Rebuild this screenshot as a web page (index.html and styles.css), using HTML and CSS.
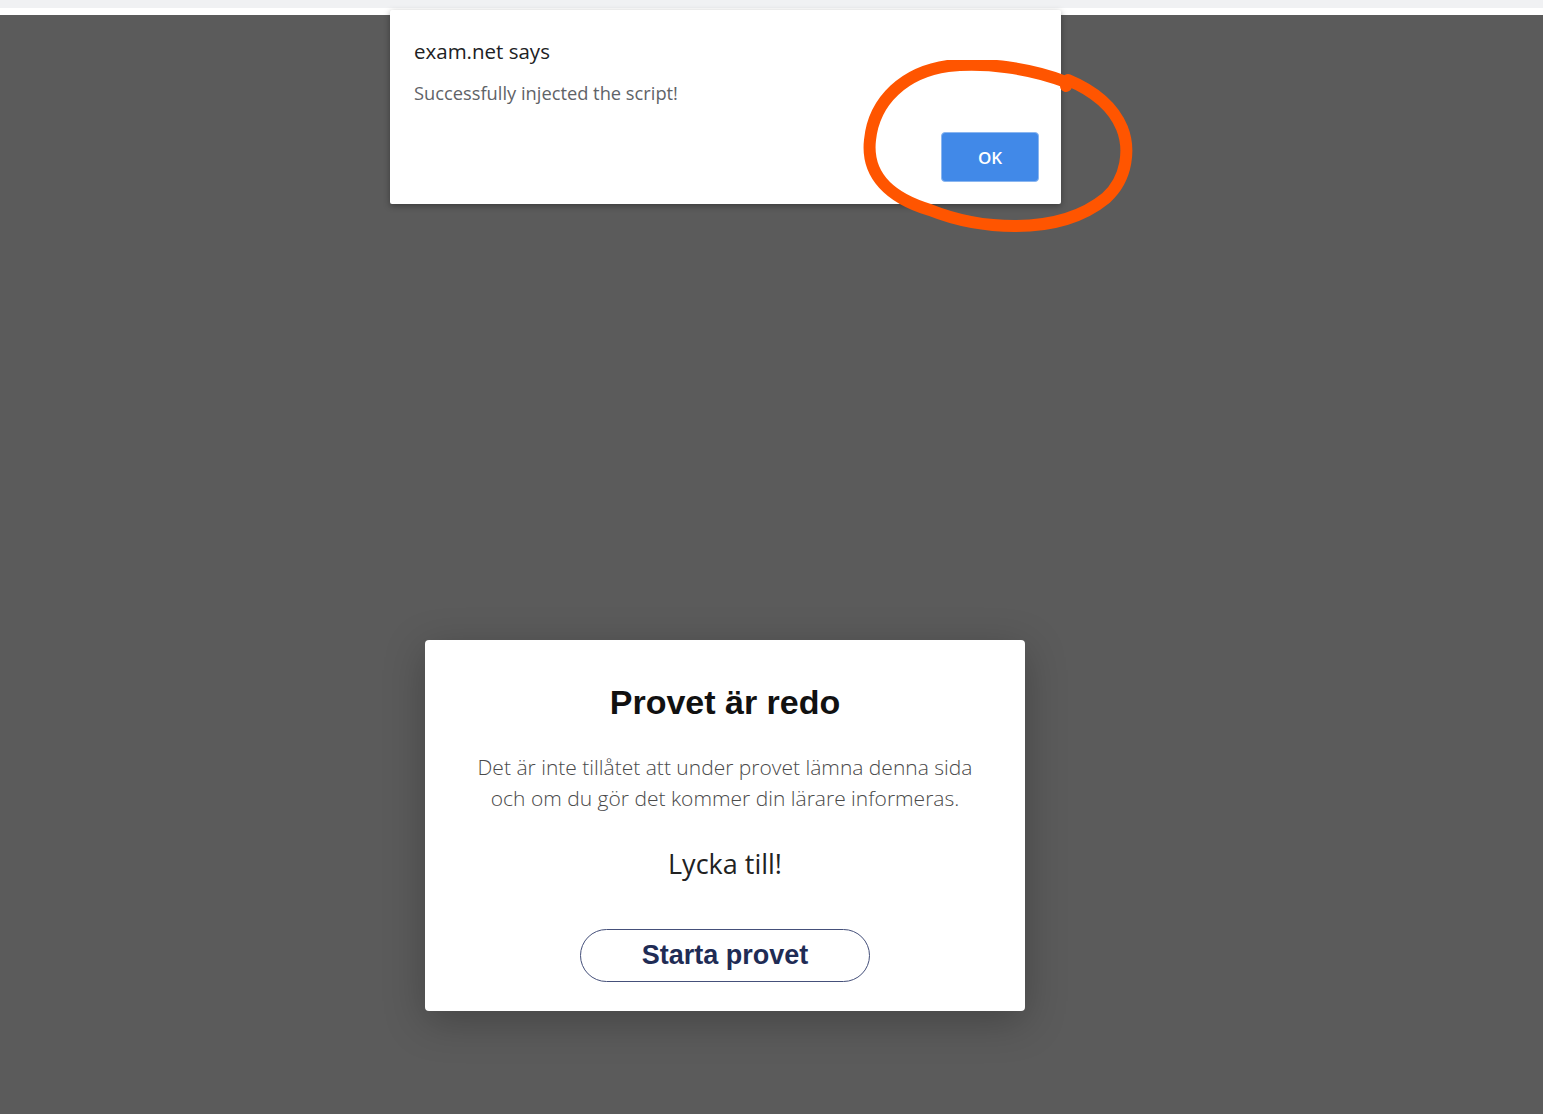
FILE: index.html
```html
<!DOCTYPE html>
<html lang="sv">
<head>
<meta charset="utf-8">
<title>exam.net</title>
<link rel="stylesheet" href="styles.css">
</head>
<body>
<div class="chrome"></div>
<div class="chrome-line"></div>
<main class="stage">
  <section class="card">
    <h1 class="card-title">Provet är redo</h1>
    <p class="card-text">Det är inte tillåtet att under provet lämna denna sida<br>och om du gör det kommer din lärare informeras.</p>
    <p class="card-luck">Lycka till!</p>
    <button class="start-btn">Starta provet</button>
  </section>
</main>
<div class="alert">
  <div class="alert-title">exam.net says</div>
  <div class="alert-msg">Successfully injected the script!</div>
  <div class="alert-actions"><button class="ok-btn">OK</button></div>
</div>
<svg class="scribble" width="290" height="190" viewBox="0 0 290 190">
  <path d="M206 22 C170 8 125 2 88 6 C45 12 14 40 10 80 C6 115 30 138 70 150 C95 160 125 166 155 166 C192 166 224 156 246 138 C268 118 270 88 262 68 C252 44 232 30 208 20 L206 26" fill="none" stroke="#ff5500" stroke-width="12" stroke-linecap="round" stroke-linejoin="round"/>
</svg>
</body>
</html>
```
FILE: styles.css
```css
html, body {
  margin: 0;
  padding: 0;
}
body {
  background: #5b5b5b;
  font-family: "Open Sans", "Noto Sans", sans-serif;
  min-height: 1114px;
  position: relative;
  overflow: hidden;
}
.chrome {
  height: 8px;
  background: #f0f1f3;
}
.chrome-line {
  height: 7px;
  background: #ffffff;
}
.stage {
  display: flex;
  justify-content: center;
  padding-top: 625px;
  padding-right: 93px;
}
.card {
  width: 600px;
  height: 371px;
  box-sizing: border-box;
  background: #fff;
  border-radius: 4px;
  box-shadow: 0 10px 40px rgba(0,0,0,0.25);
  text-align: center;
  padding-top: 42px;
}
.card-title {
  margin: 0;
  font-family: "Liberation Sans", Arial, sans-serif;
  font-weight: 700;
  font-size: 34px;
  line-height: 40px;
  color: #111;
}
.card-text {
  margin: 30px 0 0;
  font-family: "Open Sans", sans-serif;
  font-weight: 300;
  font-size: 21px;
  line-height: 31px;
  color: #4a4a4a;
}
.card-luck {
  margin: 32px 0 0;
  font-family: "Open Sans", sans-serif;
  font-weight: 400;
  font-size: 27px;
  line-height: 36px;
  color: #222;
}
.start-btn {
  margin-top: 47px;
  width: 290px;
  height: 53px;
  border: 1px solid #45507a;
  border-radius: 27px;
  background: #fff;
  font-family: "Liberation Sans", Arial, sans-serif;
  font-weight: 700;
  font-size: 27px;
  color: #1f2c55;
  padding: 0;
}
.alert {
  position: absolute;
  left: 390px;
  top: 10px;
  width: 671px;
  height: 194px;
  box-sizing: border-box;
  background: #fff;
  border-radius: 2px;
  box-shadow: 0 2px 6px rgba(0,0,0,0.35);
  padding: 26px 22px 0 24px;
}
.alert-title {
  font-family: "Open Sans", sans-serif;
  font-size: 20.5px;
  line-height: 30px;
  color: #202124;
}
.alert-msg {
  margin-top: 14px;
  font-family: "Open Sans", sans-serif;
  font-size: 18.3px;
  line-height: 26px;
  color: #5f6368;
}
.alert-actions {
  display: flex;
  justify-content: flex-end;
  margin-top: 26px;
}
.ok-btn {
  width: 98px;
  height: 50px;
  background: #4189e8;
  border: 1px solid #8ab6f0;
  border-radius: 4px;
  color: #fff;
  font-family: "Open Sans", sans-serif;
  font-weight: 600;
  font-size: 17px;
  margin-right: 0;
}
.scribble {
  position: absolute;
  left: 860px;
  top: 60px;
}
```
